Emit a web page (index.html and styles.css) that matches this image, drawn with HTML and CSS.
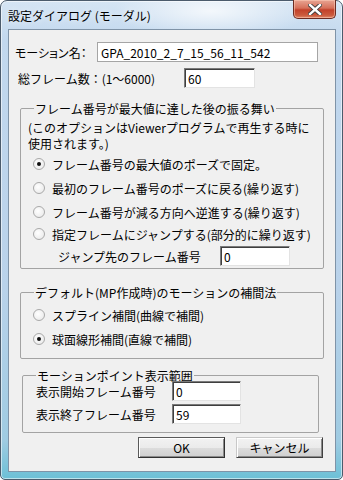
FILE: index.html
```html
<!DOCTYPE html>
<html lang="ja">

<head>
    <meta charset="UTF-8" />
    <meta name="viewport" content="width=device-width, initial-scale=1.0" />
    <title>設定ダイアログ (モーダル)</title>
    <link rel="stylesheet" href="styles.css">
</head>

<body>
    <div class="window">
        <div class="titlebar">
            <span class="title">設定ダイアログ (モーダル)</span>
            <span class="close">
                <svg width="14" height="11" viewBox="0 0 14 11">
                    <path d="M2 1 L12 10 M12 1 L2 10" stroke="#3a3a3a" stroke-width="4.2" stroke-linecap="square" />
                    <path d="M2 1 L12 10 M12 1 L2 10" stroke="#fff" stroke-width="2.4" stroke-linecap="square" />
                </svg>
            </span>
        </div>

        <div class="client">
            <div class="row row-name">
                <span class="label">モーション名：</span>
                <span class="field field-flat field-name">GPA_2010_2_7_15_56_11_542</span>
            </div>
            <div class="row row-count">
                <span class="label">総フレーム数：(1〜6000)</span>
                <span class="field field-count">60</span>
            </div>

            <fieldset class="group group-loop">
                <legend>フレーム番号が最大値に達した後の振る舞い</legend>
                <p class="note">
                    <span>(このオプションはViewerプログラムで再生する時に</span>
                    <span>使用されます。)</span>
                </p>
                <div class="radios">
                    <label class="radio checked"><i></i>フレーム番号の最大値のポーズで固定。</label>
                    <label class="radio"><i></i>最初のフレーム番号のポーズに戻る(繰り返す)</label>
                    <label class="radio"><i></i>フレーム番号が減る方向へ逆進する(繰り返す)</label>
                    <label class="radio"><i></i>指定フレームにジャンプする(部分的に繰り返す)</label>
                </div>
                <div class="row row-jump">
                    <span class="label">ジャンプ先のフレーム番号</span>
                    <span class="field field-jump">0</span>
                </div>
            </fieldset>

            <fieldset class="group group-interp">
                <legend>デフォルト(MP作成時)のモーションの補間法</legend>
                <div class="radios">
                    <label class="radio"><i></i>スプライン補間(曲線で補間)</label>
                    <label class="radio checked"><i></i>球面線形補間(直線で補間)</label>
                </div>
            </fieldset>

            <fieldset class="group group-range">
                <legend>モーションポイント表示範囲</legend>
                <div class="row row-range">
                    <span class="label">表示開始フレーム番号</span>
                    <span class="field field-range">0</span>
                </div>
                <div class="row row-range">
                    <span class="label">表示終了フレーム番号</span>
                    <span class="field field-range">59</span>
                </div>
            </fieldset>

            <div class="buttons">
                <button class="btn btn-default">OK</button>
                <button class="btn">キャンセル</button>
            </div>
        </div>
    </div>
</body>

</html>
```

FILE: styles.css
```css
:root {
    --face: #f0f0f0;
    --group-line: #a3a3a3;
    --txt: #000;
}

* {
    box-sizing: border-box;
    margin: 0;
    padding: 0;
}

body {
    font-family: "Noto Sans CJK JP", "Noto Sans", sans-serif;
    font-size: 12px;
    line-height: 13px;
    color: var(--txt);
    background: #fff;
    width: 343px;
    height: 480px;
    overflow: hidden;
}

.window {
    width: 343px;
    height: 480px;
    border: 1px solid #4b5b6c;
    border-radius: 7px 7px 5px 5px;
    background:
        radial-gradient(ellipse 140px 40px at 210px 10px, rgba(255, 255, 255, 0.75), transparent 70%),
        linear-gradient(180deg, #d5e5f4 0%, #c2d8ee 8%, #b9d2ea 60%, #9fcbe2 92%, #6cc0d6 100%);
    box-shadow: inset 0 0 0 1px rgba(255, 255, 255, 0.55);
    display: flex;
    flex-direction: column;
}

.titlebar {
    height: 28px;
    display: flex;
    align-items: flex-start;
    padding-left: 7px;
}

.title {
    margin-top: 8px;
    color: #000;
    text-shadow: 0 0 6px rgba(255, 255, 255, 0.9);
}

.close {
    margin-left: auto;
    margin-right: 6px;
    margin-top: -1px;
    width: 43px;
    height: 19px;
    display: flex;
    align-items: center;
    justify-content: center;
    border: 1px solid #6b2b22;
    border-top: none;
    border-radius: 0 0 5px 5px;
    background: linear-gradient(180deg, #e8a593 0%, #d6705a 45%, #c2412a 55%, #cb5b3e 85%, #e08a6c 100%);
    box-shadow: inset 0 0 0 1px rgba(255, 210, 190, 0.5);
}

.client {
    margin: 0 6px 0 7px;
    height: 443px;
    border: 1px solid #7f93a7;
    background: var(--face);
    display: flex;
    flex-direction: column;
}

.row {
    display: flex;
    align-items: center;
    height: 20px;
}

.label {
    white-space: nowrap;
    flex-shrink: 0;
}

.field {
    height: 20px;
    background: #fff;
    padding: 0 3px;
    display: flex;
    align-items: center;
    border: 1px solid;
    border-color: #7a7a7a #e3e3e3 #e3e3e3 #7a7a7a;
    box-shadow: inset 1px 1px 0 #3f3f3f;
}

.field-flat {
    border-color: #a5a5a5;
    box-shadow: none;
}

.row-name {
    margin-top: 12px;
    padding-left: 6px;
}

.row-name .label {
    width: 82px;
    font-feature-settings: "palt";
}

.field-name {
    width: 221px;
}

.row-count {
    margin-top: 6px;
    padding-left: 9px;
}

.row-count .label {
    width: 166px;
}

.field-count {
    width: 71px;
}

.group {
    border: 1px solid var(--group-line);
    border-radius: 2px;
    margin: 0 11px;
    padding: 0 0 0 7px;
}

.group legend {
    margin-left: 6px;
    padding: 0 1px;
}

.group-loop {
    margin-top: 14px;
    padding-bottom: 2px;
}

.note {
    margin-top: 5px;
}

.note span {
    display: block;
    line-height: 16px;
}

.radios {
    display: flex;
    flex-direction: column;
}

.radio {
    height: 24px;
    display: flex;
    align-items: center;
    padding-left: 5px;
}

.radio i {
    width: 12px;
    height: 12px;
    border-radius: 50%;
    border: 1px solid #a9a9a9;
    background: radial-gradient(circle at 40% 40%, #fff 0%, #e6e6e6 100%);
    margin-right: 7px;
    display: flex;
    align-items: center;
    justify-content: center;
}

.radio.checked i::after {
    content: "";
    width: 4px;
    height: 4px;
    border-radius: 50%;
    background: #111;
}

.group-loop .radio:last-child {
    height: 20px;
}

.row-jump {
    margin-top: 2px;
    padding-left: 30px;
}

.row-jump .label {
    width: 162px;
}

.field-jump {
    width: 70px;
}

.group-interp {
    margin-top: 17px;
    padding-bottom: 7px;
}

.group-interp .radios {
    margin-top: 4px;
}

.group-range {
    margin: 10px 16px 0 13px;
    padding-bottom: 8px;
}

.group-range legend {
    margin-bottom: -1px;
}

.row-range {
    padding-left: 6px;
}

.row-range + .row-range {
    margin-top: 3px;
}

.row-range .label {
    width: 136px;
}

.field-range {
    width: 69px;
}

.buttons {
    display: flex;
    justify-content: flex-end;
    gap: 11px;
    margin: 4px 12px 0 0;
}

.btn {
    font: inherit;
    color: var(--txt);
    width: 87px;
    height: 21px;
    background: linear-gradient(180deg, #f2f2f2 0%, #ebebeb 50%, #dddddd 51%, #cfcfcf 100%);
    border: 1px solid;
    border-color: #c8c8c8 #404040 #404040 #c8c8c8;
    box-shadow: inset 1px 1px 0 #fff, inset -1px -1px 0 #8a8a8a;
}

.btn-default {
    border-color: #5a5a5a #303030 #303030 #5a5a5a;
}
```
